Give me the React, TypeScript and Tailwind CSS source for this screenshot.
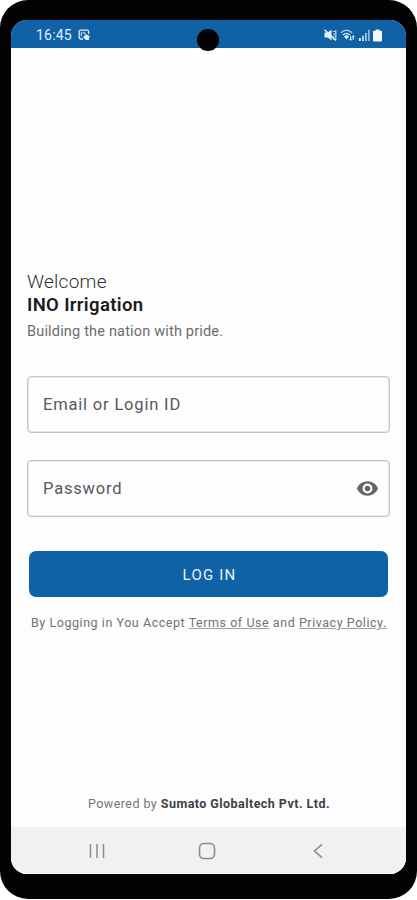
import React from 'react';

const StatusBar: React.FC = () => (
    <header className="relative flex h-[28px] shrink-0 items-center bg-[#0f62a6] pt-[2px] pr-[24px] pl-[25px] text-[#e3effa]">
        <span className="w-[37px] text-[14px] leading-none tracking-[0.2px] whitespace-nowrap">16:45</span>
        <svg className="ml-[4.5px] h-[12px] w-[12px]" viewBox="0 0 12 12" fill="none" stroke="currentColor" strokeWidth="1.3">
            <path d="M10.6 5V2.6a1.4 1.4 0 0 0-1.4-1.4H2.6a1.4 1.4 0 0 0-1.4 1.4v6a1.4 1.4 0 0 0 1.4 1.4H5" />
            <path d="M3.4 3.8h4M3.4 3.5v4M7 3.8v2" opacity=".7" />
            <path d="M5 8.2 8 5.3l3.6 1.8-.8 4H7.8Z" fill="currentColor" stroke="none" />
        </svg>
        <div className="ml-auto flex items-center gap-[3.5px]">
            <svg className="h-[12px] w-[13px]" viewBox="0 0 13 12" fill="none" stroke="currentColor">
                <path d="M.5 3.5h3L7.5.8v10.4L3.5 8.5h-3Z" fill="currentColor" stroke="none" />
                <path d="M.5.7 12 11.5" strokeWidth="1.4" />
                <path d="M8.7 2.5h3M9 5h2.6M9 7.3h1.5M8.4 10h3.3M11.8 1v10" strokeWidth="1.2" opacity=".8" />
            </svg>
            <svg className="h-[12px] w-[15px]" viewBox="0 0 15 12" fill="none" stroke="currentColor" strokeWidth="1.5">
                <path d="M.8 3.8c3.6-3.1 7.8-3.1 11.4 0" opacity=".7" />
                <path d="M2.7 6c2.5-2 5.1-2 7.6 0" opacity=".85" />
                <path d="m4 7.3 2.5 3.2L9 7.3C7.3 6 5.7 6 4 7.3Z" fill="currentColor" stroke="none" />
                <path d="M10.6 7.2v4M13.2 6.8v4" strokeWidth="1.2" />
                <path d="m9.3 9.8 1.3 1.5 1.3-1.5m0-1.7 1.3-1.5 1.3 1.5" strokeWidth=".8" />
            </svg>
            <svg className="h-[12px] w-[11px]" viewBox="0 0 11 12" fill="currentColor">
                <path d="M0 9h1.8v3H0Z" />
                <path d="M3 6.8h1.8V12H3Z" opacity=".85" />
                <path d="M6 4h1.8v8H6Z" opacity=".7" />
                <path d="M9 .8h1.8V12H9Z" opacity=".6" />
            </svg>
            <svg className="h-[13px] w-[9px]" viewBox="0 0 9 13" fill="#f5f9ff">
                <path d="M2.6.5h3.8v1.3H8a1 1 0 0 1 1 1v8.7a1 1 0 0 1-1 1H1a1 1 0 0 1-1-1V2.8a1 1 0 0 1 1-1h1.6Z" />
            </svg>
        </div>
        <div className="absolute top-[8.5px] left-[185.5px] h-[22px] w-[22px] rounded-full bg-[#030303]" />
    </header>
);

const Field: React.FC<{ label: string; children?: React.ReactNode }> = ({ label, children }) => (
    <div className="flex h-[57px] items-center justify-between rounded-[4px] border border-[#c4c5c7] pr-[10px] pl-[15px] shadow-[inset_0_0_0_1px_#e6e7e9]">
        <span className="pt-[2px] text-[16.5px] leading-none tracking-[0.82px] text-[#58585c]">{label}</span>
        {children}
    </div>
);

const NavigationBar: React.FC = () => (
    <nav className="flex h-[47px] shrink-0 items-center justify-between border-b border-white bg-[#f1f1f1] pt-[2px] pr-[83px] pl-[78px] text-[#8c8c8c]">
        <svg className="h-[16px] w-[16px]" viewBox="0 0 16 16" stroke="currentColor" strokeWidth="1.5">
            <path d="M1.5 1v14M8 1v14M14.5 1v14" />
        </svg>
        <svg className="mr-[4px] h-[18px] w-[18px]" viewBox="0 0 18 18" fill="none" stroke="currentColor" strokeWidth="1.6">
            <rect x="1.5" y="1.5" width="15" height="15" rx="4.5" />
        </svg>
        <svg className="h-[16px] w-[10px]" viewBox="0 0 10 16" fill="none" stroke="currentColor" strokeWidth="1.6">
            <path d="M9 1.3 1.5 8 9 14.7" />
        </svg>
    </nav>
);

const App: React.FC = () => (
    <div className="h-[900px] w-[417px] bg-white font-['Roboto',sans-serif]">
        <div className="h-[899px] w-full rounded-[28px] bg-[#030303] pt-[20px] pr-[11px] pl-[11px]">
            <div className="flex h-[854px] flex-col overflow-hidden rounded-[16px] bg-[#fdfdfe]">
                <StatusBar />

                <main className="flex flex-1 flex-col px-[16px] pt-[222px]">
                    <h1 className="flex flex-col leading-[23px] text-[#303034]">
                        <span className="text-[19px] font-light tracking-[0.25px]">Welcome</span>
                        <span className="text-[18.5px] leading-[24px] font-semibold tracking-[0.35px] text-[#1b1b1e]">INO Irrigation</span>
                    </h1>
                    <p className="mt-[6px] text-[14.5px] leading-[18px] tracking-[0.18px] text-[#6c6c6f]">Building the nation with pride.</p>

                    <form className="mt-[35px] flex flex-col gap-[27px]">
                        <Field label="Email or Login ID" />
                        <Field label="Password">
                            <svg className="h-[23px] w-[23px]" viewBox="0 0 24 24" fill="#666668">
                                <path d="M12 4.5C7 4.5 2.73 7.61 1 12c1.73 4.39 6 7.5 11 7.5s9.27-3.11 11-7.5c-1.73-4.39-6-7.5-11-7.5ZM12 17.2a5.2 5.2 0 1 1 0-10.4 5.2 5.2 0 0 1 0 10.4Zm0-8.1a2.9 2.9 0 1 0 0 5.8 2.9 2.9 0 0 0 0-5.8Z" />
                            </svg>
                        </Field>
                        <button type="button" className="mx-[2px] mt-[7px] h-[46px] rounded-[7px] bg-[#0f62a6] pt-[2px] pl-[2px] text-[15px] tracking-[1.2px] text-[#e8f2fb]">
                            LOG IN
                        </button>
                    </form>

                    <p className="mt-[17px] ml-[4px] text-[12.5px] leading-[18px] tracking-[0.55px] whitespace-nowrap text-[#727274]">
                        By Logging in You Accept <span className="underline decoration-[#a0a0a2]">Terms of Use</span> and <span className="underline decoration-[#a0a0a2]">Privacy Policy.</span>
                    </p>

                    <p className="mt-auto mb-[14px] pl-[1px] text-center text-[12.5px] leading-[18px] tracking-[0.45px] whitespace-nowrap text-[#757577]">
                        Powered by <span className="font-bold text-[#404043]">Sumato Globaltech Pvt. Ltd.</span>
                    </p>
                </main>

                <NavigationBar />
            </div>
        </div>
    </div>
);

export default App;
